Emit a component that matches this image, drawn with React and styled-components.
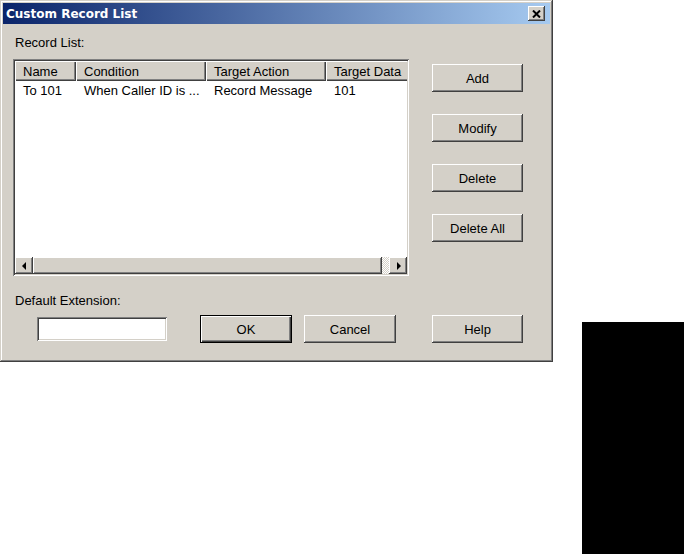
import React from "react";
import styled, { createGlobalStyle, css } from "styled-components";

const Global = createGlobalStyle`
  html, body { margin: 0; padding: 0; background: #fff; }
  body { width: 684px; height: 554px; overflow: hidden; }
  * { box-sizing: border-box; }
`;

const raised = css`
  box-shadow: inset -1px -1px #404040, inset 1px 1px #fff,
    inset -2px -2px #808080, inset 2px 2px #d4d0c8;
`;
const sunken = css`
  box-shadow: inset 1px 1px #808080, inset -1px -1px #fff,
    inset 2px 2px #404040, inset -2px -2px #d4d0c8;
`;

const Page = styled.div`
  display: flex;
  align-items: flex-start;
  width: 684px;
  height: 554px;
`;

const Window = styled.div`
  width: 553px;
  height: 362px;
  padding: 3px;
  background: #d4d0c8;
  display: flex;
  flex-direction: column;
  box-shadow: inset -1px -1px #404040, inset 1px 1px #d4d0c8,
    inset -2px -2px #808080, inset 2px 2px #fff;
  font-family: "Liberation Sans", Arial, sans-serif;
  font-size: 13px;
  line-height: 15px;
  color: #000;
`;

const TitleBar = styled.div`
  height: 21px;
  display: flex;
  align-items: center;
  justify-content: space-between;
  padding: 0 5px 0 3px;
  background: linear-gradient(to right, #0a246a, #a6caf0);
`;

const Title = styled.span`
  font-family: "DejaVu Sans", Verdana, sans-serif;
  font-weight: bold;
  font-size: 12px;
  color: #fff;
  padding-top: 1px;
`;

const CloseButton = styled.div`
  width: 17px;
  height: 15px;
  background: #d4d0c8;
  display: flex;
  align-items: center;
  justify-content: center;
  ${raised};
`;

const Content = styled.div`
  padding: 11px 0 0 10px;
  display: flex;
  flex-direction: column;
`;

const Label = styled.div`
  height: 15px;
  padding-left: ${(p) => p.$indent || 2}px;
  margin-bottom: ${(p) => p.$gap || 0}px;
`;

const MainRow = styled.div`
  display: flex;
  gap: 23px;
  align-items: flex-start;
`;

const ListBox = styled.div`
  width: 396px;
  height: 217px;
  padding: 2px;
  background: #fff;
  display: flex;
  flex-direction: column;
  overflow: hidden;
  ${sunken};
`;

const Header = styled.div`
  display: flex;
  height: 20px;
  flex-shrink: 0;
  overflow: hidden;
`;

const HeaderCell = styled.div`
  width: ${(p) => p.$w}px;
  flex-shrink: 0;
  height: 20px;
  padding: 3px 0 0 8px;
  background: #d4d0c8;
  white-space: nowrap;
  box-shadow: inset 1px 1px #fff, inset -1px -1px #404040,
    inset -2px -2px #808080;
`;

const Row = styled.div`
  display: flex;
  height: 17px;
  padding-top: 2px;
  flex-shrink: 0;
`;

const Cell = styled.div`
  width: ${(p) => p.$w}px;
  flex-shrink: 0;
  padding-left: 8px;
  white-space: nowrap;
  overflow: hidden;
`;

const ScrollBar = styled.div`
  margin-top: auto;
  height: 17px;
  display: flex;
  flex-shrink: 0;
  background: repeating-conic-gradient(#d4d0c8 0 25%, #fff 0 50%) 0 0 / 2px 2px;
`;

const ScrollArrow = styled.div`
  width: 18px;
  height: 17px;
  flex-shrink: 0;
  background: #d4d0c8;
  display: flex;
  align-items: center;
  justify-content: center;
  ${raised};
`;

const Thumb = styled.div`
  width: 349px;
  height: 17px;
  background: #d4d0c8;
  ${raised};
`;

const Track = styled.div`
  flex: 1;
`;

const ButtonColumn = styled.div`
  display: flex;
  flex-direction: column;
  gap: 22px;
  margin-top: 5px;
`;

const Button = styled.div`
  width: ${(p) => p.$w || 91}px;
  height: 28px;
  flex-shrink: 0;
  background: #d4d0c8;
  display: flex;
  align-items: center;
  justify-content: center;
  ${(p) =>
    p.$default
      ? css`
          border: 1px solid #000;
          box-shadow: inset 1px 1px #fff, inset -1px -1px #404040,
            inset -2px -2px #808080;
        `
      : raised};
`;

const BottomRow = styled.div`
  display: flex;
  align-items: center;
  height: 28px;
  margin-top: 7px;
`;

const TextField = styled.div`
  width: 130px;
  height: 24px;
  margin-left: 24px;
  margin-right: 33px;
  background: #fff;
  ${sunken};
`;

const Spacer = styled.div`
  width: ${(p) => p.$w}px;
  flex-shrink: 0;
`;

const BlackBlock = styled.div`
  margin-left: 29px;
  margin-top: 322px;
  width: 102px;
  height: 232px;
  background: #000;
`;

const Tri = ({ dir }) => (
  <svg width="5" height="8" viewBox="0 0 5 8">
    {dir === "left" ? (
      <polygon points="4,0 4,8 0,4" fill="#000" />
    ) : (
      <polygon points="1,0 1,8 5,4" fill="#000" />
    )}
  </svg>
);

const cols = [
  { w: 61, h: "Name", d: "To 101" },
  { w: 130, h: "Condition", d: "When Caller ID is ..." },
  { w: 120, h: "Target Action", d: "Record Message" },
  { w: 83, h: "Target Data", d: "101" },
];

export default function App() {
  return (
    <Page>
      <Global />
      <Window>
        <TitleBar>
          <Title>Custom Record List</Title>
          <CloseButton>
            <svg width="9" height="8" viewBox="0 0 9 8">
              <path d="M1 0.5 L8 7.5 M8 0.5 L1 7.5" stroke="#000" strokeWidth="2" />
            </svg>
          </CloseButton>
        </TitleBar>
        <Content>
          <Label $gap={9}>Record List:</Label>
          <MainRow>
            <ListBox>
              <Header>
                {cols.map((c) => (
                  <HeaderCell key={c.h} $w={c.w}>
                    {c.h}
                  </HeaderCell>
                ))}
              </Header>
              <Row>
                {cols.map((c) => (
                  <Cell key={c.h} $w={c.w}>
                    {c.d}
                  </Cell>
                ))}
              </Row>
              <ScrollBar>
                <ScrollArrow>
                  <Tri dir="left" />
                </ScrollArrow>
                <Thumb />
                <Track />
                <ScrollArrow>
                  <Tri dir="right" />
                </ScrollArrow>
              </ScrollBar>
            </ListBox>
            <ButtonColumn>
              <Button>Add</Button>
              <Button>Modify</Button>
              <Button>Delete</Button>
              <Button>Delete All</Button>
            </ButtonColumn>
          </MainRow>
          <Label $indent={2} style={{ marginTop: 17 }}>Default Extension:</Label>
          <BottomRow>
            <TextField />
            <Button $default $w={92}>OK</Button>
            <Spacer $w={12} />
            <Button $w={92}>Cancel</Button>
            <Spacer $w={36} />
            <Button>Help</Button>
          </BottomRow>
        </Content>
      </Window>
      <BlackBlock />
    </Page>
  );
}
